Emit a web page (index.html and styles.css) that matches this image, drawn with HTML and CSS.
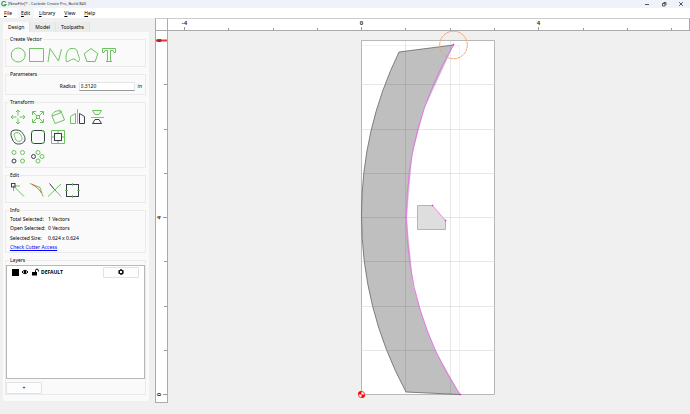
FILE: index.html
```html
<!DOCTYPE html>
<html lang="en">
<head>
<meta charset="utf-8">
<title>[NewFile]* - Carbide Create Pro, Build 843</title>
<link rel="stylesheet" href="styles.css">
</head>
<body>
<header class="titlebar">
  <svg class="logo" viewBox="0 0 6 6" aria-hidden="true"><path d="M4.800 1.500A2.200 2.200 0 1 0 5 3.500H3.200" fill="none" stroke="#2fa84a" stroke-width="1.200"/></svg>
  <span class="title">[NewFile]* - Carbide Create Pro, Build 843</span>
  <button class="win" aria-label="Minimize"><svg viewBox="0 0 8 8"><path d="M2 4.500H6"/></svg></button>
  <button class="win" aria-label="Restore"><svg viewBox="0 0 8 8"><path d="M2.500 3.500H5V6H2.500ZM3.500 2.500H6V5"/></svg></button>
  <button class="win" aria-label="Close"><svg viewBox="0 0 8 8"><path d="M2.200 2.200L5.800 5.800M5.800 2.200L2.200 5.800"/></svg></button>
</header>
<nav class="menubar">
  <button><u>F</u>ile</button>
  <button class="active"><u>E</u>dit</button>
  <button><u>L</u>ibrary</button>
  <button><u>V</u>iew</button>
  <button><u>H</u>elp</button>
</nav>
<main class="workspace">
  <aside class="side">
    <div class="tabs" role="tablist">
      <button class="tab selected" role="tab">Design</button>
      <button class="tab" role="tab">Model</button>
      <button class="tab" role="tab">Toolpaths</button>
    </div>
    <div class="pane">
      <fieldset class="create">
        <legend>Create Vector</legend>
        <div class="tools tight">
          <button aria-label="Circle"><svg viewBox="0 0 18 18"><circle cx="9.200" cy="9" r="7"/></svg></button>
          <button aria-label="Rectangle"><svg viewBox="0 0 18 18"><path d="M2.500 2.500H16.500V15.500H2.500Z"/></svg></button>
          <button aria-label="Polyline"><svg viewBox="0 0 18 18"><path d="M3 16L5 2.500L13.500 15L16.500 3"/></svg></button>
          <button aria-label="Curve"><svg viewBox="0 0 18 18"><path d="M3.500 15.500C2 10 4 3 8 2.500C12 2.200 14 3 14.500 6C15 10 18 13 15.500 15.500C13.500 16 13 13 10.500 13C7.500 13 6.500 16 3.500 15.500Z"/></svg></button>
          <button aria-label="Polygon"><svg viewBox="0 0 18 18"><path d="M10 2.500L16.800 7.700L14.200 15.500H5.800L3.200 7.700Z"/></svg></button>
          <button aria-label="Text"><svg viewBox="0 0 18 18"><path d="M3.500 2.500H16.500V6.500H15L14 4.500H11.500V14.500L13 15.500H7L8.500 14.500V4.500H6L5 6.500H3.500Z"/></svg></button>
        </div>
      </fieldset>
      <fieldset class="params">
        <legend>Parameters</legend>
        <div class="param-row">
          <label for="radius">Radius</label>
          <input id="radius" type="text" value="0.3120">
          <span>in</span>
        </div>
      </fieldset>
      <fieldset class="transform">
        <legend>Transform</legend>
        <div class="tools">
          <button aria-label="Move"><svg viewBox="0 0 18 18"><path d="M9 2V7.500M9 10.500V16M2 9H7.500M10.500 9H16M7 4L9 2L11 4M7 14L9 16L11 14M4 7L2 9L4 11M14 7L16 9L14 11"/></svg></button>
          <button aria-label="Scale"><svg viewBox="0 0 18 18"><path d="M4 4L8 8M14 4L10 8M4 14L8 10M14 14L10 10M3.500 7V3.500H7M11 3.500H14.500V7M3.500 11V14.500H7M11 14.500H14.500V11M7 9L9 7L11 9L9 11Z"/></svg></button>
          <button aria-label="Rotate"><svg viewBox="0 0 18 18"><path d="M3 8L12.500 4.500L15.500 12L6 15.500ZM3 8C3 4.500 8 1.500 12 3.500M10 1.800L12.500 3.500L11 5"/></svg></button>
          <button aria-label="Flip horizontally"><svg viewBox="0 0 18 18"><path class="grey" d="M8.500 1V16"/><path d="M1.500 15.500V8.500L6.500 5.500V15.500Z"/><path class="ink" d="M10.500 5.500L15.500 8.500V15.500H10.500Z"/></svg></button>
          <button aria-label="Flip vertically"><svg viewBox="0 0 18 18"><path d="M3.500 2.500H12.500L10 6.500H6Z"/><path class="grey" d="M2 9.500H15"/><path class="ink" d="M6 11.500H10L12.500 15.500H3.500Z"/></svg></button>
        </div>
        <div class="tools">
          <button aria-label="Offset"><svg viewBox="0 0 18 18"><path class="ink" d="M3 3C5 1.500 11 1.500 13 4.500C15 7 17 10 15.500 13C14 16 9 17 6 15C3.500 13 3.500 11 2.500 9C1.800 7 1.500 4.500 3 3Z"/><path d="M6 5C9 4 11 5 12 7.500C13 9 14 12 11.500 13C9 14 7 13 6.500 11C6 9 4 6 6 5Z"/></svg></button>
          <button aria-label="Corners"><svg viewBox="0 0 18 18"><rect class="ink" x="2.500" y="2.500" width="13" height="13" rx="2.500"/><path d="M2.500 5Q2.500 2.500 5 2.500M13 2.500Q15.500 2.500 15.500 5M15.500 13Q15.500 15.500 13 15.500M5 15.500Q2.500 15.500 2.500 13"/></svg></button>
          <button aria-label="Align"><svg viewBox="0 0 18 18"><path d="M2.500 2.500H15.500V15.500H2.500ZM9 2.500V15.500M2.500 9H15.500"/><rect class="ink boxed" x="5.500" y="5.500" width="7" height="7"/></svg></button>
        </div>
        <div class="tools">
          <button aria-label="Linear array"><svg viewBox="0 0 18 18"><circle cx="5" cy="4.500" r="2"/><circle cx="13.500" cy="4.500" r="2"/><circle class="ink" cx="5" cy="13" r="2"/><circle cx="13.500" cy="13" r="2"/></svg></button>
          <button aria-label="Circular array"><svg viewBox="0 0 18 18"><circle cx="9" cy="4.500" r="2"/><circle cx="13" cy="8.500" r="2"/><circle class="ink" cx="4.500" cy="8.500" r="2"/><circle cx="9" cy="13" r="2"/></svg></button>
        </div>
      </fieldset>
      <fieldset class="edit">
        <legend>Edit</legend>
        <div class="tools tight">
          <button aria-label="Node edit"><svg viewBox="0 0 18 18"><path d="M4.500 5L15 15.500M4.500 10V5H11"/><rect class="ink" x="2.500" y="2.500" width="3.500" height="3.500"/></svg></button>
          <button aria-label="Smooth"><svg viewBox="0 0 18 18"><path d="M3 2.500L13 6.500L16 15.500"/><path class="red" d="M5 3.500C9 5 12 8 14.500 12"/></svg></button>
          <button aria-label="Trim"><svg viewBox="0 0 18 18"><path d="M3 15.500L16 3M10 9L16 15.500"/><path class="ink" d="M4.500 2.500L9 8"/><path class="red" d="M8.500 7.500L11 10"/></svg></button>
          <button aria-label="Bounding box"><svg viewBox="0 0 18 18"><rect class="ink" x="3.500" y="3.500" width="12" height="12"/><path d="M9.500 2V5M9.500 14V17M2 9.500H5M14 9.500H17"/></svg></button>
        </div>
      </fieldset>
      <fieldset class="info">
        <legend>Info</legend>
        <div class="facts">
          <span>Total Selected:</span><span>1 Vectors</span>
          <span>Open Selected:</span><span>0 Vectors</span>
          <span>Selected Size:</span><span>0.624 x 0.624</span>
          <a href="#">Check Cutter Access</a>
        </div>
      </fieldset>
      <fieldset class="layers">
        <legend>Layers</legend>
        <div class="list">
          <div class="layer">
            <span class="swatch"></span>
            <svg class="mark" viewBox="0 0 8 8" aria-hidden="true"><path d="M1 4Q4 .5 7 4Q4 7.500 1 4Z" fill="none" stroke="#000"/><circle cx="4" cy="4" r="1.300"/></svg>
            <svg class="mark" viewBox="0 0 8 8" aria-hidden="true"><path d="M1 4H6V7.500H1Z"/><path d="M4.500 4V2.500Q4.500 1 6 1T7.500 3.500" fill="none" stroke="#000"/></svg>
            <b>DEFAULT</b>
            <button class="push" aria-label="Layer settings"><svg class="gear" viewBox="0 0 8 8"><circle cx="4" cy="4" r="1.900" fill="none" stroke="#000" stroke-width="1.300"/><path d="M4 1.200V2M4 6V6.800M1.600 2.600L2.300 3M5.700 5L6.400 5.400M6.400 2.600L5.700 3M2.300 5L1.600 5.400" stroke="#000" stroke-width="1.300"/></svg></button>
          </div>
        </div>
        <button class="push add">+</button>
      </fieldset>
    </div>
  </aside>
  <section class="view" aria-label="Drawing">
    <div class="corner"></div>
    <div class="ruler across">
      <svg viewBox="168 19 521 11" preserveAspectRatio="xMinYMin meet">
        <path class="tick" d="M184.500 27V30M228.500 28V30M273.500 28V30M317.500 28V30M361.500 27V30M405.500 28V30M450.500 28V30M494.500 28V30M538.500 27V30M583.500 28V30M627.500 28V30M671.500 28V30"/>
        <text x="184.500" y="25">-4</text><text x="361.500" y="25">0</text><text x="538.500" y="25">4</text>
      </svg>
    </div>
    <div class="ruler down">
      <svg viewBox="156 31 11 371" preserveAspectRatio="xMinYMin meet">
        <path class="tick" d="M163 394.500H167M164 350.500H167M164 306.500H167M164 261.500H167M163 217.500H167M164 173.500H167M164 129.500H167M164 84.500H167"/>
        <path d="M156 40.500H167" stroke="#e33" stroke-width="2"/>
        <text transform="translate(161 394.500) rotate(-90)">0</text>
        <text transform="translate(161 217.500) rotate(-90)">4</text>
        <text transform="translate(161 40.500) rotate(-90)">8</text>
      </svg>
    </div>
    <div class="stage">
      <svg viewBox="168 31 522 383" preserveAspectRatio="xMinYMin meet">
        <rect x="361.500" y="40.500" width="133" height="354" fill="#fff"/>
        <path d="M453.500 45L399 52A374 374 0 0 0 361.500 215A374 374 0 0 0 406 392L460 394.500L435 350L424 322L413 285L406.500 218L412 155L424 109Z" fill="#bfbfbf"/>
        <path d="M361.500 84.500H494.500M361.500 129.500H494.500M361.500 173.500H494.500M361.500 217.500H494.500M361.500 261.500H494.500M361.500 306.500H494.500M361.500 350.500H494.500M405.500 40.500V394.500M450.500 40.500V394.500" fill="none" stroke="#000" stroke-opacity=".09"/>
        <path d="M459.500 45.500V394.500M361.500 45.500H459.500" fill="none" stroke="#000" stroke-opacity=".05"/>
        <path d="M361.500 40.500H494.500V394.500H361.500Z" fill="none" stroke="#b8b8b8"/>
        <path d="M453.500 45L399 52A374 374 0 0 0 361.500 215A374 374 0 0 0 406 392L460 394.500" fill="none" stroke="#666" stroke-width=".8"/>
        <path d="M453.500 45L424 109L412 155L406.500 218L413 285L424 322L435 350L460 394.500" fill="none" stroke="#e879e8" stroke-opacity=".4" stroke-width=".6"/>
        <path d="M453.500 45A338 338 0 0 0 406.500 218A320 320 0 0 0 460 394.500" fill="none" stroke="#e56fe5" stroke-width=".9"/>
        <path d="M417.500 205.500H432.500L445.500 220.500V229.500H417.500Z" fill="#dedede" stroke="#ec8cec"/>
        <path d="M432 205H433V206H432ZM445 220H446V221H445ZM453 44H454V45H453ZM459.500 394H461V395H459.500Z" fill="#d633d6" stroke="#d633d6" stroke-width=".5"/>
        <circle cx="453.500" cy="45" r="13.800" fill="none" stroke="#f5a26a" stroke-dasharray="3 .6"/>
        <circle cx="361.500" cy="394.500" r="3.500" fill="#fff"/>
        <path d="M361.500 394.500V391A3.500 3.500 0 0 0 358 394.500ZM361.500 394.500V398A3.500 3.500 0 0 0 365 394.500Z" fill="#f00"/>
        <circle cx="361.500" cy="394.500" r="3.100" fill="none" stroke="#f00" stroke-width=".8"/>
      </svg>
    </div>
  </section>
</main>
</body>
</html>
```
FILE: styles.css
```css
* { box-sizing: border-box; }

body {
  margin: 0;
  min-height: 100vh;
  display: flex;
  flex-direction: column;
  background: #f0f0f0;
  color: #000;
  font: 5px/8px "Noto Sans", sans-serif;
}

button {
  margin: 0;
  padding: 0;
  border: 0;
  background: none;
  color: inherit;
  font: inherit;
}

svg { display: block; }

.titlebar {
  display: flex;
  align-items: center;
  height: 8px;
  padding-right: 1px;
  background: #eff3f9;
  color: #333;
}
.logo { width: 6px; height: 6px; margin: 0 1px; }
.title { flex: 1; white-space: nowrap; font-size: 4px; }
.win { width: 17px; display: grid; place-items: center; }
.win svg { width: 8px; height: 8px; fill: none; stroke: #555; stroke-width: 1; }

.menubar {
  display: flex;
  gap: 1px;
  height: 10px;
  background: #fff;
}
.menubar button { padding: 0 4px; line-height: 10px; }
.menubar .active { background: #f6f6f6; }
.menubar u { text-decoration-thickness: 1px; }

.workspace {
  flex: 1;
  display: grid;
  grid-template-columns: 155px 1fr;
}

.side {
  display: flex;
  flex-direction: column;
  padding: 4px 6px 13px 3px;
}
.tabs { display: flex; height: 10px; }
.tab { padding: 0 5px; background: #ececec; border-right: 1px solid #e4e4e4; }
.tab.selected { background: #fafafa; }
.pane {
  flex: 1;
  display: flex;
  flex-direction: column;
  gap: 3px;
  padding: 3px 3px 6px 2px;
  background: #fafafa;
}

fieldset {
  margin: 0;
  min-width: 0;
  padding: 0 3px;
  border: 1px solid #ebebeb;
}
legend { height: 8px; padding: 0 1px; margin-left: 0; }

.create { padding-top: 3px; padding-bottom: 2px; }
.params { padding-top: 4px; padding-bottom: 3px; }
.transform { padding-top: 2px; padding-bottom: 1px; }
.edit { padding-top: 2px; padding-bottom: 3px; }

.tools { display: flex; gap: 2px; }
.tools + .tools { margin-top: 2px; }
.tools.tight { gap: 0; }
.tools svg {
  width: 18px;
  height: 18px;
  fill: none;
  stroke: #6cc35f;
  stroke-width: 1;
}
.tools .ink { stroke: #3a4048; }
.tools .boxed { fill: #fafafa; }
.tools .grey { stroke: #aaa; }
.tools .red { stroke: #f0563c; }

.param-row {
  display: flex;
  justify-content: flex-end;
  gap: 3px;
  line-height: 9px;
}
.param-row input {
  width: 56px;
  height: 9px;
  padding: 0 1px;
  border: 1px solid #e4e4e4;
  border-bottom-color: #999;
  background: #fff;
  color: #000;
  font: inherit;
}

.facts {
  display: grid;
  grid-template-columns: 38px 1fr;
  grid-template-rows: repeat(4, 1fr);
  align-items: center;
  height: 38px;
  padding: 0 1px;
  white-space: nowrap;
}
.facts a { grid-column: span 2; color: #00f; }

.layers {
  flex: 1;
  display: flex;
  flex-direction: column;
  gap: 3px;
  padding: 1px 0 0;
}
.layers legend { margin-left: 3px; }
.list { flex: 1; border: 1px solid #b8b8b8; background: #fff; }
.layer { display: flex; align-items: center; gap: 2px; padding: 0 5px; height: 12px; }
.swatch { width: 7px; height: 7px; background: #000; }
.mark { width: 8px; height: 8px; }
.push {
  width: 36px;
  height: 11px;
  border: 1px solid #e2e2e2;
  border-radius: 1px;
  background: #fdfdfd;
}
.layer .push { margin-left: auto; display: grid; place-items: center; }
.gear { width: 8px; height: 8px; }
.add { height: 12px; flex: none; }

.view {
  display: grid;
  grid-template-columns: 13px 1fr;
  grid-template-rows: 13px 1fr;
  min-width: 0;
}
.corner, .ruler { border: 1px solid #aaa; background: #fff; }
.corner { border-top-color: #ccc; }
.across { border-left: 0; border-top-color: #ccc; }
.down { border-top: 0; margin-bottom: 11px; }
.ruler svg, .stage svg { width: 100%; height: 100%; }
.ruler, .stage { min-height: 0; min-width: 0; overflow: hidden; }
.tick { fill: none; stroke: #999; }
.ruler text { font: bold 6px "Noto Sans", sans-serif; text-anchor: middle; fill: #333; }
```
